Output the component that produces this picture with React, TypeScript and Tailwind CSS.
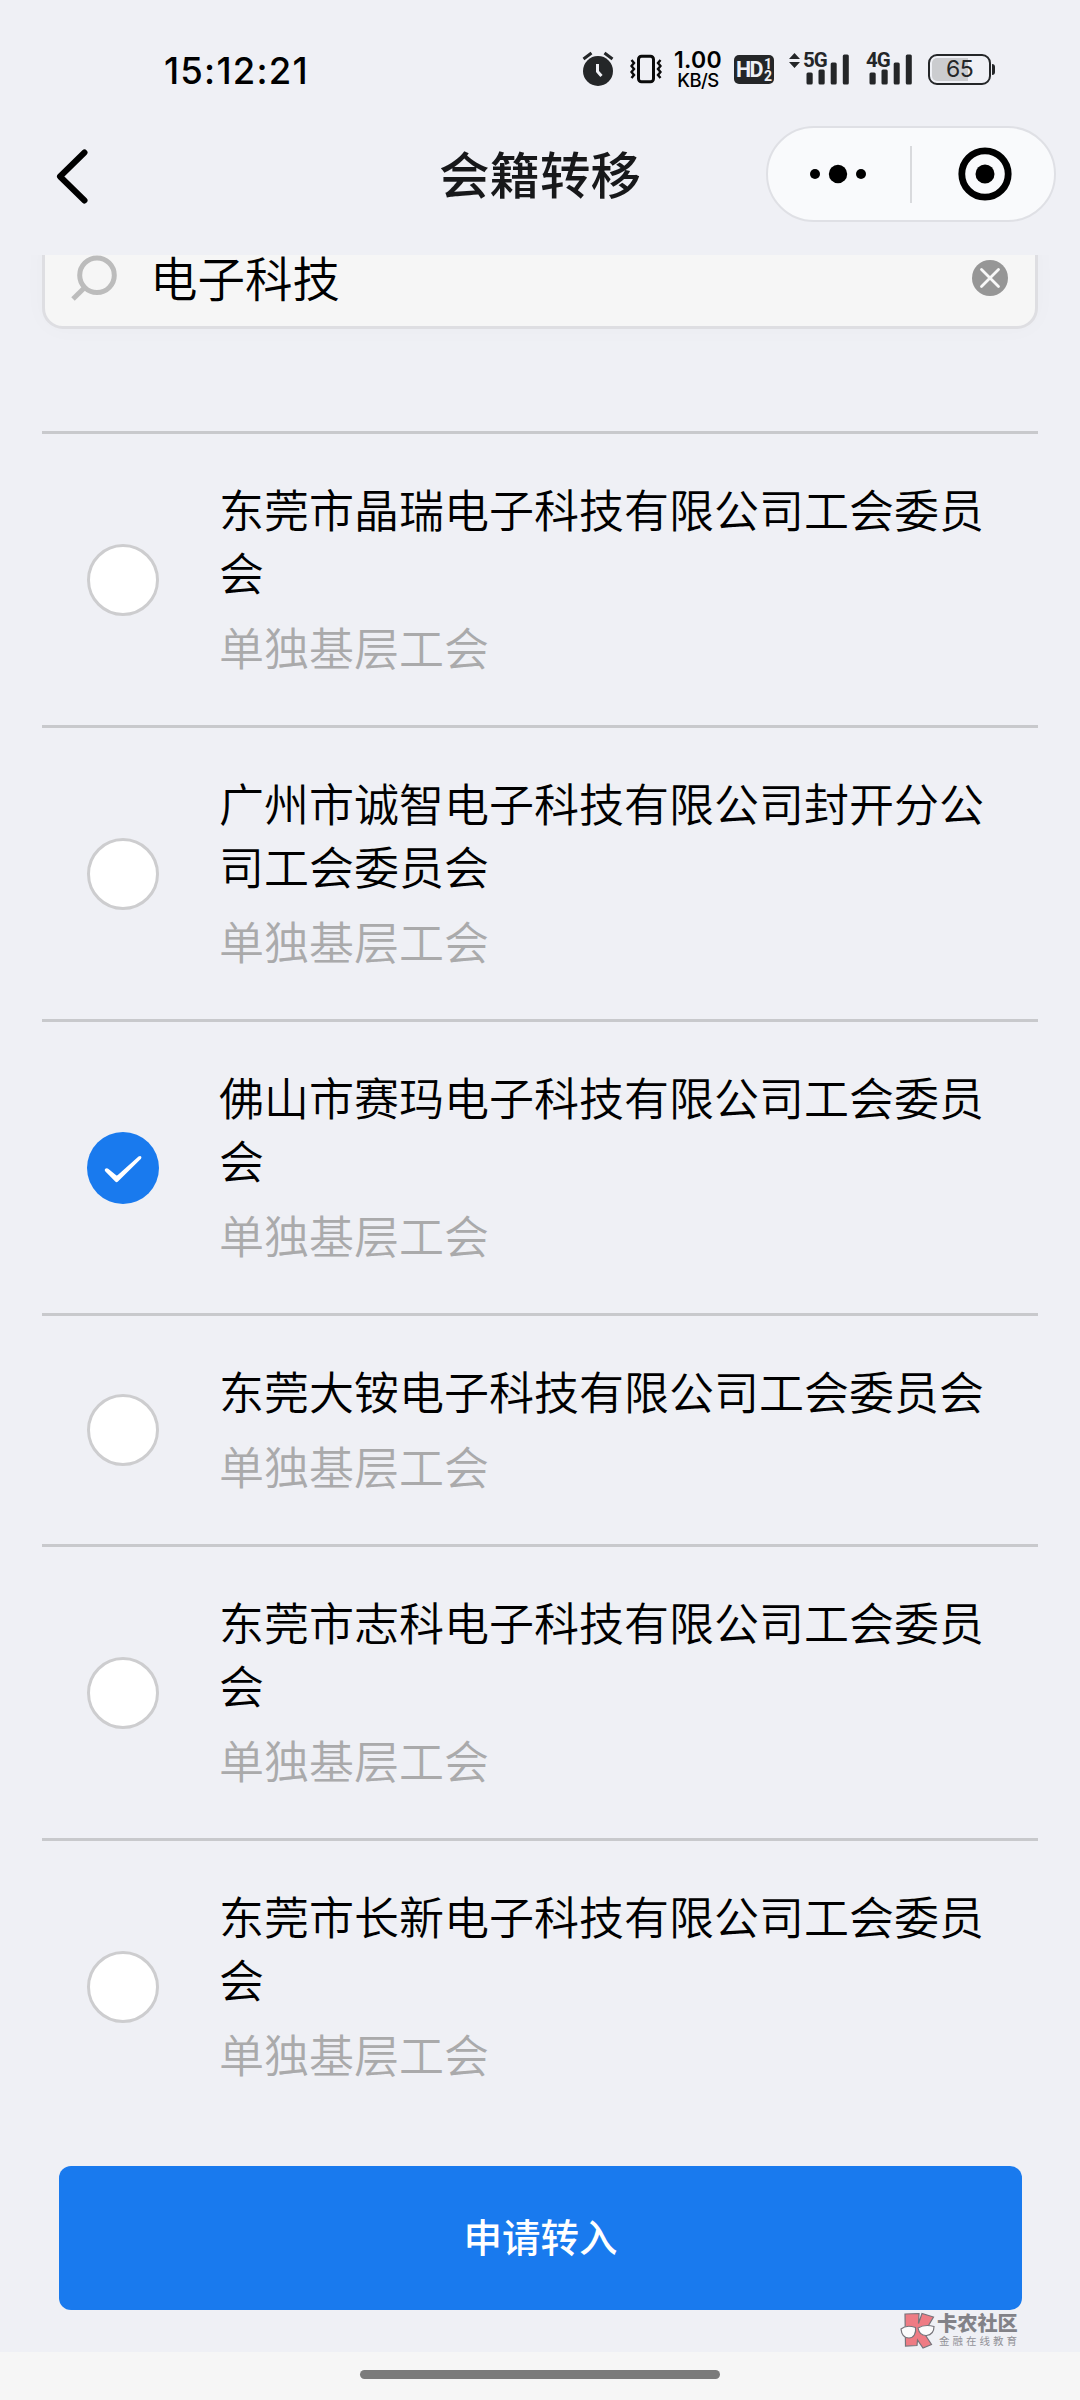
import { useState } from "react";

type Union = {
  name: string;
  kind: string;
};

const UNIONS: Union[] = [
  { name: "东莞市晶瑞电子科技有限公司工会委员会", kind: "单独基层工会" },
  { name: "广州市诚智电子科技有限公司封开分公司工会委员会", kind: "单独基层工会" },
  { name: "佛山市赛玛电子科技有限公司工会委员会", kind: "单独基层工会" },
  { name: "东莞大铵电子科技有限公司工会委员会", kind: "单独基层工会" },
  { name: "东莞市志科电子科技有限公司工会委员会", kind: "单独基层工会" },
  { name: "东莞市长新电子科技有限公司工会委员会", kind: "单独基层工会" },
];

function AlarmIcon() {
  return (
    <svg width="32" height="36" viewBox="0 0 32 36" fill="none">
      <circle cx="16" cy="20" r="15" fill="#242628" />
      <path d="M1.500 8 9.500 2M30.500 8 22.500 2" stroke="#242628" strokeWidth="3" />
      <path d="M15.500 13v7.500l4 4.500" stroke="#eff0f5" strokeWidth="3" />
    </svg>
  );
}

function VibrateIcon() {
  return (
    <svg width="32" height="30" viewBox="0 0 32 30" fill="none" stroke="#0a0a0a">
      <rect x="8.500" y="2.200" width="15" height="25.500" rx="3" strokeWidth="3" />
      <path
        d="M1.500 6l2.500 3-2.500 3 2.500 3-2.500 3 2.500 3-2.500 3M30.500 6 28 9l2.500 3-2.500 3 2.500 3-2.500 3 2.500 3"
        strokeWidth="2.400"
      />
    </svg>
  );
}

function SignalBars() {
  return (
    <svg width="44" height="32" viewBox="0 0 44 32" fill="#242628">
      <rect x="0.500" y="19.500" width="6.200" height="12" rx="1.500" />
      <rect x="12.500" y="16.500" width="6.200" height="15" rx="1.500" />
      <rect x="24.700" y="9.500" width="6" height="22" rx="1.500" />
      <rect x="36.800" y="1.500" width="6" height="30" rx="1.500" />
    </svg>
  );
}

function StatusBar() {
  return (
    <div className="flex h-[110px] items-start pt-[51px] pr-[85px] pl-[164px] font-['Inter','Noto_Sans_CJK_SC',sans-serif] text-[#242628]">
      <div className="mt-[2px] text-[36.500px] leading-9 font-medium tracking-[1.200px] text-black">
        15:12:21
      </div>
      <div className="ml-auto flex h-9 items-start">
        <AlarmIcon />
        <div className="mt-[3px] ml-[16px]">
          <VibrateIcon />
        </div>
        <div className="ml-[11px] flex w-[50px] shrink-0 flex-col items-center font-medium text-black">
          <span className="text-[23px] leading-[19px] font-semibold tracking-[0.300px]">1.00</span>
          <span className="text-[18.500px] leading-[20px] tracking-[-0.500px]">KB/S</span>
        </div>
        <div className="mt-[4px] ml-[11px] flex h-[29px] w-10 items-center justify-center rounded-[5px] bg-[#242628] font-bold text-[#eff0f5]">
          <span className="font-['Roboto'] text-[21.500px] leading-7 tracking-[-1.500px]">HD</span>
          <span className="ml-[2px] flex flex-col font-['Roboto'] text-[14px] leading-[12px]">
            <span>1</span>
            <span>2</span>
          </span>
        </div>
        <svg className="mt-[2px] ml-[15px]" width="11" height="15" viewBox="0 0 11 15" fill="#242628">
          <path d="M5.500 0 11 6H0zM5.500 15 0 9h11z" />
        </svg>
        <div className="relative mt-[2px] ml-[6px]">
          <SignalBars />
          <span className="absolute -top-px -left-[3px] font-['Roboto'] text-[20.500px] leading-[17px] font-bold tracking-[-1px]">
            5G
          </span>
        </div>
        <div className="relative mt-[2px] ml-[19px]">
          <SignalBars />
          <span className="absolute -top-px -left-[3px] font-['Roboto'] text-[20.500px] leading-[17px] font-bold tracking-[-1px]">
            4G
          </span>
        </div>
        <div className="mt-[3px] ml-[15px] flex items-center">
          <div className="flex h-[31px] w-[63px] items-center justify-center rounded-[9px] border-[2.500px] border-[#242628] bg-[linear-gradient(90deg,#cbcccf_65%,transparent_65%)] bg-clip-content p-[2px] text-[23px] leading-none tracking-[-0.500px]">
            65
          </div>
          <div className="ml-px h-[11px] w-[3px] rounded-r-sm bg-[#242628]" />
        </div>
      </div>
    </div>
  );
}

function NavBar() {
  return (
    <div className="grid h-[145px] grid-cols-[1fr_auto_1fr] items-start">
      <svg className="mt-[39px] ml-[55px]" width="34" height="55" viewBox="0 0 34 55" fill="none">
        <path d="M29.500 3.500 5 27.500l24.500 24" stroke="#000" strokeWidth="6" strokeLinecap="round" strokeLinejoin="round" />
      </svg>
      <h1 className="mt-[30px] text-[50.500px] leading-[64px] font-medium text-[#17181a]">会籍转移</h1>
      <div className="mt-4 mr-6 flex h-24 w-[290px] items-center justify-self-end rounded-full border-2 border-[#dfe0e5] bg-[#f9fafc]">
        <svg className="ml-[40px]" width="60" height="20" viewBox="0 0 60 20">
          <circle cx="7" cy="10" r="5" />
          <circle cx="30" cy="10" r="9.200" />
          <circle cx="53" cy="10" r="5" />
        </svg>
        <div className="ml-[42px] h-[57px] w-0.5 bg-[#d9dadd]" />
        <svg className="ml-[45px]" width="56" height="56" viewBox="0 0 56 56">
          <circle cx="28" cy="28" r="23.200" fill="none" stroke="#000" strokeWidth="6.800" />
          <circle cx="28" cy="28" r="9.500" />
        </svg>
      </div>
    </div>
  );
}

function SearchBox({ value }: { value: string }) {
  return (
    <div className="-mt-[22px] flex h-24 shrink-0 items-center rounded-[21px] border-[3px] border-[#dedee2] bg-[#f6f6f6] px-[26px] pb-[6px] shadow-[0_0_24px_rgba(0,0,40,0.025)]">
      <svg width="48" height="48" viewBox="0 0 48 48" fill="none" stroke="#bcbcbc" strokeWidth="5">
        <circle cx="26" cy="21.300" r="17.300" />
        <path d="M13.700 33.500 2 45" />
      </svg>
      <span className="ml-[31px] pb-[2px] text-[47.500px] leading-[60px] font-[350] text-black">{value}</span>
      <svg className="mr-px ml-auto" width="36" height="36" viewBox="0 0 36 36">
        <circle cx="18" cy="18" r="18" fill="#969696" />
        <path d="m9.500 9.500 17 17m0-17-17 17" stroke="#f8f8f8" strokeWidth="2.800" strokeLinecap="round" />
      </svg>
    </div>
  );
}

function Radio({ checked }: { checked: boolean }) {
  if (!checked) {
    return <span className="size-[72px] shrink-0 rounded-full border-[3px] border-[#cdcdcf] bg-white" />;
  }
  return (
    <span className="flex size-[72px] shrink-0 items-center justify-center rounded-full bg-[#197aee]">
      <svg width="72" height="72" viewBox="0 0 72 72" fill="#fff">
        <path d="M18.300 36.800c1-.9 2.200-.7 3.200.2l7.700 6.200c.6.500 1 .4 1.600-.1L51.500 24.600c1-.9 2.100-.9 2.600-.2.500.6.400 1.600-.3 2.500L31.200 49.300c-1.200 1.200-2.100 1.100-3.200 0L18.400 39.500c-.8-.9-.9-1.900-.1-2.700z" />
      </svg>
    </span>
  );
}

export default function App() {
  const [selected, setSelected] = useState(2);

  return (
    <div className="relative flex h-[2400px] w-[1080px] flex-col overflow-hidden bg-[#eff0f5] font-['Noto_Sans_CJK_SC',sans-serif]">
      <StatusBar />
      <NavBar />

      <div className="flex min-h-0 flex-1 flex-col overflow-hidden px-[42px]">
        <SearchBox value="电子科技" />
        <ul className="mt-[102px]">
          {UNIONS.map((u, i) => (
            <li
              key={u.name}
              onClick={() => setSelected(i)}
              className="flex items-center border-t-[3px] border-[#c8c9cc] pt-[43px] pr-[50px] pb-[47px] pl-[45px]"
            >
              <div className="flex pt-1">
                <Radio checked={i === selected} />
              </div>
              <div className="ml-[60px] w-[770px] text-[45px] leading-[63px] font-[350]">
                <p className="text-black">{u.name}</p>
                <p className="mt-3 text-[#aaaaab]">{u.kind}</p>
              </div>
            </li>
          ))}
        </ul>
      </div>

      <div className="px-[59px] pb-[42px]">
        <button className="h-36 w-[963px] rounded-xl bg-[#197aee] pb-[5px] text-[38.500px] font-medium text-white">
          申请转入
        </button>
      </div>

      <div className="flex h-12 justify-center bg-[#f6f6f6] pt-[18px]">
        <div className="h-[9px] w-[360px] rounded-full bg-[#7b7b7b]" />
      </div>

      {/* Community stamp */}
      <div className="absolute top-[2312px] left-[900px] flex items-start">
        <svg width="35" height="37" viewBox="0 0 35 37" stroke="#77747b" strokeWidth="1.200">
          <path d="M5 2l14-.5-.5 10L22 1.500l11.500 3.500L24 21l7.500 11.500L23 36l-5.500-8-.5 5.500L5.500 34z" fill="#ee7b84" />
          <path d="M1 17c4-3.500 10-3 14.500-1.500 1 6-2 10.500-6.500 10.500S1.500 22.500 1 17zM18 16c5-3 10.500-3 16-1.500 0 5.500-3 8.500-7.500 9-5 .3-7.500-2.500-8.500-7.500z" fill="#fbfbfc" />
        </svg>
        <div className="ml-[2px] flex flex-col">
          <span className="text-[20.200px] leading-[22px] font-black text-[#828288]">卡农社区</span>
          <span className="ml-[2px] text-[10.500px] leading-[14px] tracking-[3px] text-[#929298]">
            金融在线教育
          </span>
        </div>
      </div>
    </div>
  );
}
